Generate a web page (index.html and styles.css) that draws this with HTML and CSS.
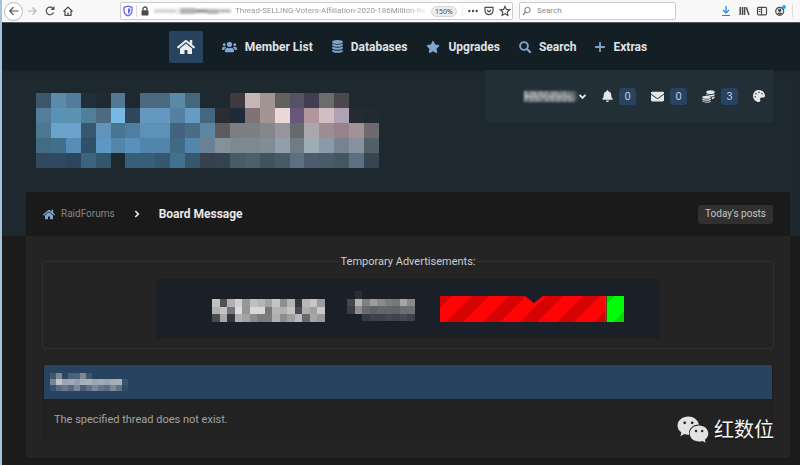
FILE: index.html
```html
<!DOCTYPE html>
<html lang="en">
<head>
<meta charset="utf-8">
<meta name="viewport" content="width=device-width, initial-scale=1">
<title>Board Message</title>
<link rel="stylesheet" href="styles.css">
</head>
<body>
<svg class="defs" width="0" height="0" aria-hidden="true">
  <symbol id="home" viewBox="0 0 576 512"><path d="M280.37 148.26L96 300.11V464a16 16 0 0 0 16 16l112.06-.29a16 16 0 0 0 15.92-16V368a16 16 0 0 1 16-16h64a16 16 0 0 1 16 16v95.64a16 16 0 0 0 16 16.05L464 480a16 16 0 0 0 16-16V300L295.67 148.26a12.19 12.19 0 0 0-15.3 0zM571.6 251.47L488 182.56V44.05a12 12 0 0 0-12-12h-56a12 12 0 0 0-12 12v72.61L318.47 43a48 48 0 0 0-61 0L4.34 251.47a12 12 0 0 0-1.6 16.9l25.5 31A12 12 0 0 0 45.15 301l235.22-193.74a12.19 12.19 0 0 1 15.3 0L530.9 301a12 12 0 0 0 16.9-1.6l25.5-31a12 12 0 0 0-1.7-16.93z"/></symbol>
</svg>

<div class="toolbar">
  <button class="tool back" aria-label="Back"><svg viewBox="0 0 12 12"><path d="M10.500 6H2M5.500 2.200L1.800 6l3.700 3.800"/></svg></button>
  <button class="tool dim" aria-label="Forward"><svg viewBox="0 0 12 12"><path d="M2 6h8M6.500 2.500L10 6 6.500 9.500"/></svg></button>
  <button class="tool" aria-label="Reload"><svg viewBox="0 0 12 12"><path d="M9.500 7.500A3.800 3.800 0 1 1 8.700 3.200"/><path class="solid" d="M10.500 1v4h-4z"/></svg></button>
  <button class="tool" aria-label="Home"><svg viewBox="0 0 12 12"><path d="M1.500 6.500L6 2l4.500 4.500M3 6v4.300h6V6M6 10V7.500"/></svg></button>

  <div class="address">
    <svg class="ic12" viewBox="0 0 12 12"><path d="M6 1.200L10 2.300v3.200c0 2.700-1.700 4.400-4 5.300-2.300-.9-4-2.600-4-5.300V2.300z" fill="#fff" stroke="#7a5cf0" stroke-width="1.300"/><path d="M6 3.300v5.500c1.500-.8 2.200-1.900 2.200-3.300V3.800z" fill="#4f6fea"/></svg>
    <span class="rule"></span>
    <svg class="ic12" viewBox="0 0 12 12"><rect x="2.500" y="5.200" width="7" height="5.300" rx=".8" fill="#4c4c4f"/><path d="M4 5.500V4a2 2 0 0 1 4 0v1.500" fill="none" stroke="#4c4c4f" stroke-width="1.300"/></svg>
    <svg class="hidden-host" viewBox="0 0 80 12" aria-hidden="true"><g fill="#b4b4b6"><rect x="1" y="4" width="22" height="4" opacity=".55"/><rect x="24" y="3" width="2" height="6" opacity=".4"/><rect x="27" y="3" width="15" height="6"/><rect x="42" y="4" width="12" height="4" fill="#a2a2a4"/><rect x="54" y="4" width="11" height="5"/><rect x="65" y="4" width="13" height="4" opacity=".8"/></g></svg>
    <input class="url" type="text" aria-label="Address" value="Thread-SELLING-Voters-Affiliation-2020-186Million-Re">
    <button class="zoom-level">150%</button>
    <span class="rule faint"></span>
    <button class="tool" aria-label="Page actions"><svg viewBox="0 0 12 12"><g class="solid"><circle cx="2.300" cy="6" r="1.200"/><circle cx="6" cy="6" r="1.200"/><circle cx="9.700" cy="6" r="1.200"/></g></svg></button>
    <button class="tool" aria-label="Save to Pocket"><svg viewBox="0 0 12 12"><path d="M2 2.300h8v3.400a4 4 0 0 1-8 0zM4 5l2 2 2-2"/></svg></button>
    <button class="tool" aria-label="Bookmark"><svg viewBox="0 0 12 12"><path d="M6 1.400l1.400 3 3.300.4-2.400 2.200.6 3.300L6 8.700l-2.900 1.600.6-3.300L1.300 4.800l3.300-.4z"/></svg></button>
  </div>

  <div class="find">
    <svg class="ic12" viewBox="0 0 12 12"><circle cx="6.500" cy="5" r="2.700" fill="none" stroke="#77777a"/><path d="M4.500 7L2 9.800" stroke="#77777a" stroke-width="1.200"/></svg>
    <input type="search" aria-label="Search the web" placeholder="Search">
  </div>

  <div class="extras">
    <button class="tool blue" aria-label="Downloads"><svg viewBox="0 0 12 12"><path d="M6 1v6.500M3 5l3 3 3-3M2 10.500h8"/></svg></button>
    <button class="tool" aria-label="Library"><svg viewBox="0 0 12 12"><path d="M2.200 2v8M4.500 2v8M6.600 2v8M8.300 2.300l2.600 7.700" stroke-width="1.500"/></svg></button>
    <button class="tool" aria-label="Sidebars"><svg viewBox="0 0 12 12"><rect x="1.500" y="2.300" width="9" height="7.500" rx="1"/><path d="M5.500 2.300v7.500M2.500 4.500h2M2.500 6.500h2"/></svg></button>
    <button class="tool" aria-label="Account"><svg viewBox="0 0 12 12"><circle cx="5.700" cy="6.300" r="4"/><circle class="solid" cx="5.700" cy="5.300" r="1.700"/><path class="solid" d="M3 8.500c1-1.500 4.400-1.500 5.400 0-1.400 1.500-4 1.500-5.400 0z"/><circle cx="10" cy="2" r="1.900" fill="#18a7f5" stroke="none"/></svg></button>
    <span class="rule"></span>
  </div>
</div>

<nav class="mainnav">
  <a class="homebtn" href="#" aria-label="Home"><svg width="18" height="16"><use href="#home"/></svg></a>
  <a href="#"><svg width="15" height="12" viewBox="0 0 640 512"><path d="M96 224c35.300 0 64-28.700 64-64s-28.700-64-64-64-64 28.700-64 64 28.700 64 64 64zm448 0c35.300 0 64-28.700 64-64s-28.700-64-64-64-64 28.700-64 64 28.700 64 64 64zm32 32h-64c-17.600 0-33.500 7.100-45.100 18.600 40.300 22.100 68.900 62 75.100 109.400h66c17.700 0 32-14.300 32-32v-32c0-35.300-28.700-64-64-64zm-256 0c61.900 0 112-50.100 112-112S381.900 32 320 32 208 82.100 208 144s50.100 112 112 112zm76.800 32h-8.300c-20.800 10-43.900 16-68.500 16s-47.600-6-68.500-16h-8.300C179.600 288 128 339.600 128 403.200V432c0 26.500 21.500 48 48 48h288c26.500 0 48-21.500 48-48v-28.800c0-63.600-51.600-115.200-115.200-115.200zm-223.700-13.400C161.500 263.100 145.600 256 128 256H64c-35.300 0-64 28.700-64 64v32c0 17.700 14.300 32 32 32h65.900c6.300-47.400 34.900-87.300 75.200-109.400z"/></svg>Member List</a>
  <a href="#"><svg width="11" height="13" viewBox="0 0 11 13"><ellipse cx="5.500" cy="2" rx="5.300" ry="1.900"/><path d="M.2 3.500c2 1.500 8.600 1.500 10.600 0v1.700c-1 2-9.600 2-10.600 0zM.2 6.600c2 1.500 8.600 1.500 10.600 0v1.700c-1 2-9.600 2-10.600 0zM.2 9.700c2 1.500 8.600 1.500 10.600 0v1.500c-1 2.100-9.600 2.100-10.600 0z"/></svg>Databases</a>
  <a href="#"><svg width="14" height="12" viewBox="0 0 576 512"><path d="M259.300 17.800L194 150.200 47.900 171.500c-26.200 3.800-36.700 36.100-17.700 54.600l105.700 103-25 145.500c-4.500 26.300 23.200 46 46.400 33.700L288 439.600l130.700 68.700c23.200 12.200 50.900-7.400 46.400-33.700l-25-145.500 105.700-103c19-18.500 8.500-50.800-17.700-54.600L382 150.200 316.700 17.800c-11.700-23.600-45.600-23.900-57.400 0z"/></svg>Upgrades</a>
  <a href="#"><svg width="12" height="12" viewBox="0 0 12 12"><circle cx="5" cy="5" r="3.900" fill="none" stroke="currentColor" stroke-width="1.900"/><path d="M8 8l3.200 3.200" stroke="currentColor" stroke-width="2.200" stroke-linecap="round"/></svg>Search</a>
  <a href="#"><svg width="10" height="10" viewBox="0 0 10 10"><path d="M5 .8v8.400M.8 5h8.400" stroke="currentColor" stroke-width="1.800" stroke-linecap="round"/></svg>Extras</a>
</nav>

<header class="hero">
  <svg class="logo" data-mosaic="logo" role="img" aria-label="Logo"></svg>
  <div class="panel">
    <button class="user" aria-label="Account menu"><svg class="username" data-mosaic="user"></svg><svg width="9" height="7" viewBox="0 0 9 7"><path d="M1.500 1.800l3 3 3-3" fill="none" stroke="currentColor" stroke-width="1.900"/></svg></button>
    <a href="#" aria-label="Alerts"><svg width="11" height="12" viewBox="0 0 448 512"><path d="M224 512c35.320 0 63.970-28.650 63.970-64H160.030c0 35.350 28.650 64 63.970 64zm215.390-149.710c-19.320-20.760-55.470-51.990-55.470-154.290 0-77.700-54.480-139.900-127.940-155.160V32c0-17.670-14.320-32-31.980-32s-31.980 14.330-31.980 32v20.840C118.560 68.100 64.080 130.300 64.080 208c0 102.300-36.150 133.530-55.470 154.290-6 6.450-8.660 14.160-8.610 21.710.11 16.400 12.980 32 32.100 32h383.800c19.120 0 32-15.600 32.100-32 .05-7.550-2.610-15.270-8.610-21.710z"/></svg><span class="count">0</span></a>
    <a href="#" aria-label="Messages"><svg width="13" height="13" viewBox="0 0 512 512"><path d="M502.300 190.800c3.900-3.100 9.700-.2 9.700 4.700V400c0 26.500-21.500 48-48 48H48c-26.500 0-48-21.500-48-48V195.600c0-5 5.700-7.800 9.700-4.700 22.400 17.400 52.100 39.500 154.100 113.600 21.100 15.400 56.700 47.800 92.200 47.600 35.700.3 72-32.800 92.300-47.600 102-74.100 131.600-96.300 154-113.700zM256 320c23.200.4 56.600-29.200 73.400-41.400 132.700-96.300 142.800-104.700 173.400-128.700 5.800-4.500 9.200-11.500 9.200-18.900v-19c0-26.500-21.500-48-48-48H48c-26.500 0-48 21.500-48 48v19c0 7.400 3.400 14.300 9.200 18.900 30.600 23.900 40.700 32.400 173.400 128.700 16.800 12.200 50.200 41.800 73.400 41.400z"/></svg><span class="count">0</span></a>
    <a href="#" aria-label="Credits"><svg width="13" height="13" viewBox="0 0 13 13"><ellipse cx="8.500" cy="2.200" rx="4.200" ry="1.900"/><path d="M4.300 4c1.500 1.200 6.900 1.200 8.400 0v1c-.6 1.200-2.200 1.600-3.700 1.600-.8-.8-2.500-1.400-4.700-1.400zM9.800 7.500c1.200-.1 2.200-.4 2.900-.9v1c-.4.900-1.500 1.400-2.900 1.600z"/><ellipse cx="4.600" cy="7.200" rx="4.300" ry="1.500"/><path d="M.3 8.700c1.500 1 7.100 1 8.600 0v1c-1 1.500-7.600 1.500-8.600 0zM.3 10.900c1.500 1 7.100 1 8.600 0v.7c-1 1.600-7.600 1.600-8.600 0z"/></svg><span class="count">3</span></a>
    <a href="#" aria-label="Theme"><svg width="12" height="12" viewBox="0 0 512 512"><path d="M204.300 5C104.900 24.400 24.800 104.300 5.200 203.400c-37 187 131.700 326.400 258.800 306.700 41.200-6.400 61.400-54.600 42.500-91.700-23.100-45.400 9.900-98.400 60.900-98.400h79.700c35.800 0 64.800-29.600 64.900-65.300C511.500 97.100 368.100-26.900 204.300 5zM96 320c-17.700 0-32-14.300-32-32s14.300-32 32-32 32 14.300 32 32-14.300 32-32 32zm32-128c-17.700 0-32-14.300-32-32s14.300-32 32-32 32 14.300 32 32-14.300 32-32 32zm128-64c-17.700 0-32-14.300-32-32s14.300-32 32-32 32 14.300 32 32-14.300 32-32 32zm128 64c-17.700 0-32-14.300-32-32s14.300-32 32-32 32 14.300 32 32-14.300 32-32 32z"/></svg></a>
  </div>
</header>

<main class="board">
  <div class="crumbs">
    <a href="#"><svg width="12" height="11"><use href="#home"/></svg>RaidForums</a>
    <svg width="6" height="8" viewBox="0 0 6 8"><path d="M1.300 1l3 3-3 3" fill="none" stroke="#e8e8e8" stroke-width="1.700"/></svg>
    <h1>Board Message</h1>
    <button class="today">Today's posts</button>
  </div>
  <div class="content">
    <fieldset>
      <legend>Temporary Advertisements:</legend>
      <svg class="banner" viewBox="0 0 504 59" role="img" aria-label="Advertisement">
        <defs>
          <pattern id="stripes" x="284" y="17" width="37" height="26" patternUnits="userSpaceOnUse">
            <rect width="37" height="26" fill="#d60303"/>
            <path d="M-14 26H6L32 0H12zM23 26H43L69 0H49z" fill="#fe0404"/>
            <path d="M-51 26H-31L-5 0H-25z" fill="#fe0404"/>
          </pattern>
        </defs>
        <rect width="504" height="59" fill="#1a1f28"/>
        <g data-mosaic="adname" transform="translate(56 20)"></g>
        <g data-mosaic="adtext" transform="translate(191 12)"></g>
        <path d="M284 17h85l9 7 9-7h63v26H284z" fill="url(#stripes)"/>
        <path d="M451 17h17v26h-17z" fill="#02fb08"/>
        <path d="M451 17h8l-8 7zM468 32v11h-10z" fill="#0ad60c"/>
        <path d="M450 17v26" stroke="#6d7a04"/>
      </svg>
    </fieldset>
    <section class="message">
      <h2 aria-label="Forum notice"><svg class="notice" data-mosaic="notice"></svg></h2>
      <p>The specified thread does not exist.</p>
    </section>
  </div>
</main>

<div class="watermark" lang="zh">
  <svg width="32" height="27" viewBox="0 0 32 27"><path fill="#e3e3e3" d="M11.300.5C5.200.5.500 4.500.500 9.600c0 2.900 1.500 5.300 3.900 7l-1 3.600 3.800-2.100c1.500.4 2.700.6 4.200.6h.8C11 12.900 15.800 8.700 22 8.600 20.900 3.900 16.500.500 11.300.5z"/><path fill="#e3e3e3" d="M22 9.500c-5.300 0-9.300 3.600-9.300 8s4 8 9.300 8c1.200 0 2.400-.2 3.500-.6l3.100 1.800-.7-3c2-1.500 3.400-3.700 3.400-6.200 0-4.400-4.100-8-9.300-8z"/><g fill="#242424"><circle cx="7.700" cy="6.800" r="1.400"/><circle cx="15.200" cy="6.800" r="1.400"/><circle cx="19" cy="15" r="1.200"/><circle cx="25.200" cy="15" r="1.200"/></g></svg>
  <span>红数位</span>
</div>
<script src="mosaic.js"></script>
</body>
</html>
```
FILE: styles.css
```css
* { box-sizing: border-box; }

body {
  margin: 0;
  min-height: 100vh;
  border-left: 2px solid #a3c3dd;
  background: #1b1b1b;
  color: #b4b4b4;
  font: 11px/14px Roboto, "Liberation Sans", sans-serif;
}

a { color: inherit; text-decoration: none; }
button, input { margin: 0; padding: 0; border: 0; background: none; color: inherit; font: inherit; }
svg { display: block; flex: none; }
.defs { position: absolute; }

/* Browser toolbar */
.toolbar {
  display: flex;
  align-items: center;
  gap: 6px;
  height: 23px;
  padding: 0 7px 0 2px;
  border-bottom: 1px solid #56585b;
  background: #f8f8f9;
  color: #4c4c4f;
  font: 8px/12px Roboto, sans-serif;
}
.tool svg { width: 12px; height: 12px; fill: none; stroke: currentColor; stroke-width: 1.2; }
.tool .solid { fill: currentColor; stroke: none; }
.tool.dim { color: #b5b5b7; }
.tool.blue { color: #1683f5; }
.back {
  display: grid;
  place-items: center;
  width: 19px;
  height: 19px;
  margin-right: -3px;
  border: 1px solid #bdbdbf;
  border-radius: 50%;
  background: #fff;
}
.ic12 { width: 12px; height: 12px; }
.rule { width: 1px; height: 12px; background: #dcdcde; }
.rule.faint { background: #ececee; }
.address, .find {
  display: flex;
  align-items: center;
  height: 18px;
  border: 1px solid #cbcbcd;
  border-radius: 2px;
  background: #fff;
}
.address { flex: 1; min-width: 0; gap: 2px; margin-left: 40px; padding: 0 1px; }
.hidden-host { width: 80px; height: 12px; filter: blur(1px); }
.url {
  flex: 1;
  min-width: 0;
  color: #98989b;
  -webkit-mask-image: linear-gradient(90deg, #000 88%, transparent);
  mask-image: linear-gradient(90deg, #000 88%, transparent);
}
.zoom-level {
  width: 26px;
  height: 11px;
  margin-right: 3px;
  border: 1px solid #d8d8da;
  border-radius: 6px;
  background: #ececee;
  font-family: "Noto Sans", sans-serif;
  font-size: 7px;
  line-height: 9px;
}
.address .tool { margin-left: 2px; }
.find { width: 157px; gap: 4px; padding-left: 1px; }
.find input { flex: 1; min-width: 0; }
.find input::placeholder { color: #88888b; opacity: 1; }
.extras { display: flex; align-items: center; gap: 6px; margin-left: 38px; }

/* Main navigation */
.mainnav {
  display: flex;
  justify-content: center;
  align-items: center;
  gap: 19px;
  height: 47px;
  padding: 0 10px 0 24px;
  background: #141e25;
  color: #e0e3e5;
  font-size: 12px;
  font-weight: 700;
}
.mainnav a { display: flex; align-items: center; gap: 8px; white-space: nowrap; }
.mainnav svg { fill: currentColor; color: #7fa6cf; }
.mainnav .homebtn { justify-content: center; width: 34px; height: 32px; border-radius: 2px; background: #27435f; }
.mainnav .homebtn svg { color: #eceeef; }

/* Header with logo and account panel */
.hero {
  display: flex;
  justify-content: space-between;
  align-items: flex-start;
  padding: 0 26px 68px 34px;
  background: #1e282f;
  box-shadow: inset 0 2px 2px -1px #151e24;
}
.logo { width: 343px; height: 75px; margin-top: 23px; }
.panel {
  display: flex;
  align-items: center;
  justify-content: flex-end;
  gap: 15px;
  width: 289px;
  height: 52px;
  padding-right: 9px;
  border-radius: 0 0 3px 3px;
  background: #232f37;
  color: #e4e6e7;
}
.panel a, .user { display: flex; align-items: center; gap: 6px; }
.panel svg { fill: currentColor; }
.panel .user { gap: 0; }
.username { width: 54px; height: 11px; filter: blur(1px); }
.count {
  width: 17px;
  height: 17px;
  border-radius: 3px;
  background: #27435f;
  color: #c3ccd4;
  line-height: 17px;
  text-align: center;
}

/* Board */
.board { margin: -44px 10px 7px 24px; border-radius: 3px; background: #242424; }
.crumbs {
  display: flex;
  align-items: center;
  gap: 19px;
  height: 44px;
  padding: 0 17px;
  border-radius: 3px 3px 0 0;
  background: #1a1a1a;
  font-size: 10px;
}
.crumbs a { display: flex; align-items: center; gap: 6px; color: #858585; }
.crumbs a svg { fill: #7fa6cf; }
h1 { margin: 0; color: #e8e8e8; font-size: 12px; }
.today { height: 19px; margin-left: auto; padding: 0 7px; border-radius: 3px; background: #303030; color: #c4c4c4; }
.content { display: grid; gap: 15px; padding: 17px 16px 18px; }
fieldset { min-width: 0; margin: 0; padding: 10px; border: 1px solid #303030; border-radius: 3px; }
legend { margin: 0 auto; padding: 2px 1px 0; color: #cecece; }
.banner { width: 504px; max-width: 100%; margin: 0 auto; }
.message { margin: 0 1px; border: 1px solid #1f1f1f; border-radius: 3px; background: #222; }
h2 { display: flex; align-items: center; height: 34px; margin: 0; padding: 0 6px; border-radius: 2px 2px 0 0; background: #27435f; }
.notice { width: 78px; height: 18px; }
.message p { margin: 0; padding: 14px 10px 12px; color: #a3a3a3; }

/* Watermark laid over the page */
.watermark {
  position: absolute;
  right: 26px;
  bottom: 21px;
  display: flex;
  align-items: center;
  gap: 5px;
  color: #f4f4f4;
  font: 20px/30px "Noto Sans CJK SC", sans-serif;
  text-shadow: 0 1px 1px #111;
}
```
FILE: mosaic.js
```js
// Each mosaic is a grid of hex colours; "-" leaves a cell empty.
const mosaics = {
  logo: { w: 343 / 23, h: 15, rows: [
    "3e566a 5a8ba8 537c9a 222e37 202a32 547892 - 4b697f 4b697f 5a8aa6 46667c - - 403a3e c5b6b5 a29493 62615f 565165 423d52 6c6b6d 4a484e - -",
    "557d9b 5a92b5 5d91b0 517f9a 4e6a80 79b9e5 30465c 6598c0 6598c0 5581a0 669bc4 43677f 2b2d35 1f2a38 7f7376 a59592 e9d8d6 69567b b1969e d2bfc1 aea2b5 262a32 212931",
    "4c7893 6aa2cc 6aa2cc 37586d 6094ba 48758f 4e7f9e 5d91b5 5d91b5 42647f 4a6c85 5d86a2 5c5c5f 7c7e84 7d8082 84868b 97949b 656b6d aba6ab 9c8d92 96828a a09295 6d696f",
    "426b84 42708c 568cb5 30506a 5c98c3 5585ab 5990bd 5285ab 5285ab 3f6a86 5186ad 6b8095 85919a 7c8990 7c8990 818d95 929eac 707c84 9eacb7 8a9aa8 778490 87919f 52606a",
    "30495e 2f4a60 2b455a 3c637f 32566c - 355e78 355e78 36586f 41718f 36586f 36414d 34434f 485b69 4d5e6e 41525f 485a68 5b7080 4c5c6d 495b69 445660 5b7080 384550"] },
  user: { w: 3, h: 11 / 3, rows: [
    "a4a7a9 6d7479 8c9194 9a9da0 777d81 9a9da0 7f8588 8c9194 697176 8c9194 8c9194 777d81 777d81 8c9194 697176 697176 5a636a 39444b",
    "b4b6b8 a4a7a9 9a9da0 a4a7a9 9a9da0 8c9194 a4a7a9 8c9194 9a9da0 a4a7a9 8c9194 a4a7a9 9a9da0 8c9194 a4a7a9 8c9194 697176 414c53",
    "8c9194 697176 8c9194 777d81 8c9194 777d81 697176 8c9194 777d81 8c9194 777d81 8c9194 777d81 8c9194 777d81 8c9194 777d81 39444b"] },
  adname: { w: 7.5, h: 7.5, rows: [
    "c0c0c0 505257 b0b0b2 cfcfcf 949699 c0c0c0 b5b6b8 a2a4a6 c4c4c4 8c8d90 b5b5b5 363841 b7b7b7 c6c6c6 9b9c9e",
    "b0b0b0 c4c4c4 737578 dcdcdc 949699 d8d8d8 d8d8d8 77787a b5b5b5 b1b1b1 c4c4c4 4a4b52 adadad a0a0a2 c9c9c9",
    "4a4b50 a8a8a8 35373d b0b0b0 a3a3a3 8b8b8d 7c7c7e 7d7d7f b0b0b0 8d8d8f a0a0a0 b9b9b9 696a6d a6a6a6 9a9a9c"] },
  adtext: { w: 7.5, h: 7.5, rows: [
    "- 2b2e35 - - - - - - -",
    "45474d b5b5b5 7f8084 9c9c9e 8b8b8f 7e7e82 76777b a5a5a7 8a8a8c",
    "3b3d43 8e8e90 6b6b6f 5f6064 65666a 65666a 616266 6d6e72 6f7074",
    "- - 363a42 40434b 3f424a 44474f 40434b 474a52 3f424a"] },
  notice: { w: 6, h: 6, rows: [
    "3d5770 7a8694 2b4762 4a6077 4f6479 7b8795 3c566f - - - - - -",
    "75859a c2c2c4 9ba4b1 a2aab5 959faf a6aeb8 aab1ba 9da6b2 a2aab5 9ca5b2 a5adb8 a9b0ba 3a546e",
    "375170 596d82 68798c 55697f 7a889a 4b6078 5f7287 7a889a 63758a 5b6e83 7a889a 5f7287 2f4b66"] }
};

document.querySelectorAll("[data-mosaic]").forEach((target) => {
  const { w, h, rows } = mosaics[target.dataset.mosaic];
  target.setAttribute("shape-rendering", "crispEdges");
  rows.forEach((row, y) => row.split(" ").forEach((color, x) => {
    if (color === "-") return;
    const cell = document.createElementNS("http://www.w3.org/2000/svg", "rect");
    cell.setAttribute("x", x * w);
    cell.setAttribute("y", y * h);
    cell.setAttribute("width", w);
    cell.setAttribute("height", h);
    cell.setAttribute("fill", "#" + color);
    target.append(cell);
  }));
});
```
